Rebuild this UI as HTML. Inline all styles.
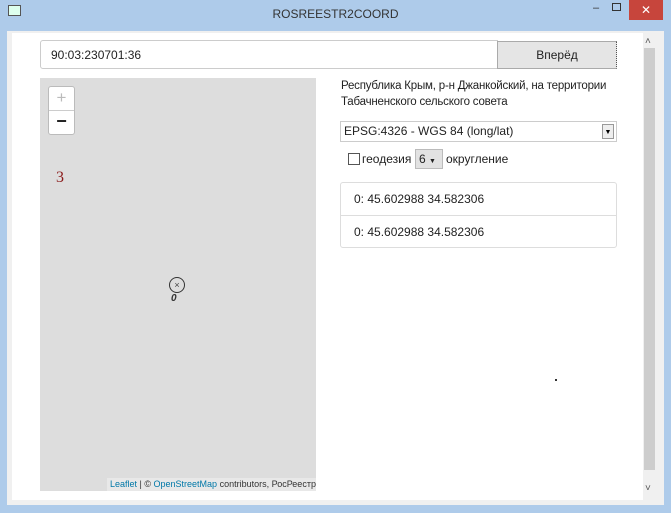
<html><head><style>
body{margin:0;width:671px;height:513px;background:#aecbea;font-family:"Liberation Sans",sans-serif;position:relative;overflow:hidden}
div{position:absolute;box-sizing:border-box}
.t{font-size:12px;color:#222}
</style></head><body>
<div style="left:0;top:0;width:671px;height:31px;background:#aecbea"></div>
<div style="left:8px;top:5px;width:13px;height:11px;border:1px solid #555;background:#dfe"></div>
<div class="t" style="left:0;top:7px;width:671px;text-align:center;font-size:12px;color:#333">ROSREESTR2COORD</div>
<div style="left:593px;top:2px;font-size:11px;color:#333">‒</div>
<div style="left:612px;top:3px;width:9px;height:8px;border:1px solid #333"></div>
<div style="left:629px;top:0;width:34px;height:20px;background:#c7453c;color:#fff;font-size:12px;text-align:center;line-height:20px">✕</div>
<div style="left:7px;top:31px;width:657px;height:474px;background:#f0f0f0"></div>
<div style="left:12px;top:33px;width:631px;height:467px;background:#fff"></div>
<div style="left:643px;top:31px;width:15px;height:474px;background:#f0f0f0"></div>
<div style="left:644px;top:48px;width:11px;height:422px;background:#cdcdcd"></div>
<div style="left:645px;top:36px;font-size:10px;color:#555">˄</div>
<div style="left:645px;top:483px;font-size:10px;color:#555">˅</div>
<div style="left:40px;top:40px;width:458px;height:29px;border:1px solid #ccc;border-radius:3px 0 0 3px"></div>
<div class="t" style="left:51px;top:48px">90:03:230701:36</div>
<div style="left:497px;top:41px;width:120px;height:28px;background:#e5e5e5;border:1px solid #aaa;border-right:1px dotted #555"></div>
<div class="t" style="left:497px;top:48px;width:120px;text-align:center">Вперёд</div>
<div style="left:40px;top:78px;width:276px;height:413px;background:#dddddd"></div>
<div style="left:48px;top:86px;width:27px;height:49px;background:#fff;border:1px solid #bbb;border-radius:3px"></div>
<div style="left:49px;top:110px;width:25px;height:1px;background:#ccc"></div>
<div style="left:48px;top:86px;width:27px;height:24px;text-align:center;line-height:24px;font-size:17px;color:#bbb">+</div>
<div style="left:48px;top:110px;width:27px;height:24px;text-align:center;line-height:22px;font-size:18px;color:#222;font-weight:bold">−</div>
<div style="left:56px;top:169px;font-family:'Liberation Serif',serif;font-size:16px;color:#8b1a1a">3</div>
<div style="left:169px;top:277px;width:16px;height:16px;border:1.5px solid #333;border-radius:50%;font-size:9px;text-align:center;line-height:14px;color:#444">×</div>
<div style="left:171px;top:293px;font-size:10px;font-style:italic;font-weight:bold;color:#333">0</div>
<div style="left:107px;top:478px;width:209px;height:13px;background:#e8e8e8;font-size:9px;color:#333;padding-left:3px;line-height:13px"><span style="color:#0078a8">Leaflet</span> | © <span style="color:#0078a8">OpenStreetMap</span> contributors, РосРеестр</div>
<div class="t" style="left:341px;top:78px;line-height:16px;font-size:11.5px;letter-spacing:-0.2px">Республика Крым, р-н Джанкойский, на территории<br>Табачненского сельского совета</div>
<div style="left:340px;top:121px;width:277px;height:21px;border:1px solid #ccc"></div>
<div class="t" style="left:344px;top:124px">EPSG:4326 - WGS 84 (long/lat)</div>
<div style="left:602px;top:124px;width:12px;height:15px;background:#eee;border:1px solid #999;font-size:7px;text-align:center;line-height:15px">▼</div>
<div style="left:348px;top:153px;width:12px;height:12px;border:1px solid #555;background:#fff"></div>
<div class="t" style="left:362px;top:152px">геодезия</div>
<div style="left:415px;top:149px;width:28px;height:20px;background:#e2e2e2;border:1px solid #bbb"></div>
<div class="t" style="left:419px;top:152px">6 <span style="font-size:7px">▼</span></div>
<div class="t" style="left:446px;top:152px">округление</div>
<div style="left:340px;top:182px;width:277px;height:66px;border:1px solid #ddd;border-radius:3px"></div>
<div style="left:341px;top:215px;width:275px;height:1px;background:#ddd"></div>
<div class="t" style="left:354px;top:192px">0: 45.602988 34.582306</div>
<div class="t" style="left:354px;top:225px">0: 45.602988 34.582306</div>
<div style="left:555px;top:379px;width:2px;height:2px;background:#333"></div>
</body></html>
